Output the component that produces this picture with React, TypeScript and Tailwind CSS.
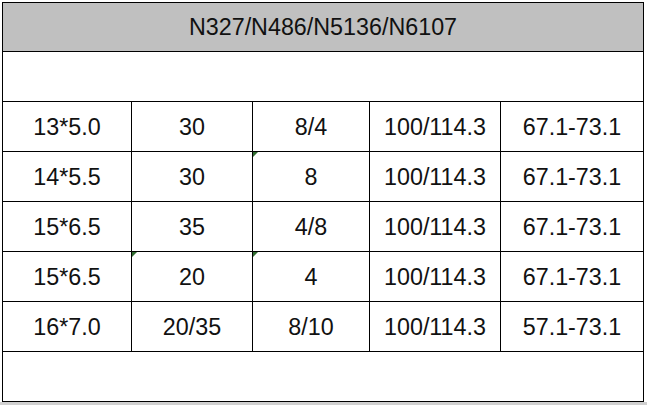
import React from "react";

const rows: { c: string[]; tri?: number[] }[] = [
  { c: ["13*5.0", "30", "8/4", "100/114.3", "67.1-73.1"] },
  { c: ["14*5.5", "30", "8", "100/114.3", "67.1-73.1"], tri: [2] },
  { c: ["15*6.5", "35", "4/8", "100/114.3", "67.1-73.1"] },
  { c: ["15*6.5", "20", "4", "100/114.3", "67.1-73.1"], tri: [1, 2] },
  { c: ["16*7.0", "20/35", "8/10", "100/114.3", "57.1-73.1"] },
];

export default function App() {
  return (
    <div className="w-[647px] h-[405px] overflow-hidden bg-white font-['Liberation_Sans',Arial,sans-serif] text-[23.3px] text-[#111]">
      <div className="pt-[2px] pl-[2px]">
        <div className="w-[642px] border border-black">
          <div className="h-[49px] bg-[#c0c0c0] border-b border-black flex items-center justify-center pt-[1px]">
            N327/N486/N5136/N6107
          </div>
          <div className="h-[50px] border-b border-black" />
          {rows.map((r, i) => (
            <div
              key={i}
              className="h-[50px] border-b border-black grid grid-cols-[129px_121px_117px_131px_142px]"
            >
              {r.c.map((t, j) => (
                <div
                  key={j}
                  className={
                    "relative flex items-center justify-center pt-[2px] " +
                    (j < 4 ? "border-r border-black" : "")
                  }
                >
                  {r.tri && r.tri.includes(j) ? (
                    <span className="absolute left-0 top-0 w-0 h-0 border-t-[5px] border-t-[#2f6b2f] border-r-[5px] border-r-transparent" />
                  ) : null}
                  {t}
                </div>
              ))}
            </div>
          ))}
          <div className="h-[49px]" />
        </div>
      </div>
      <div className="h-[4px] bg-[#d0d0d0]" />
    </div>
  );
}
